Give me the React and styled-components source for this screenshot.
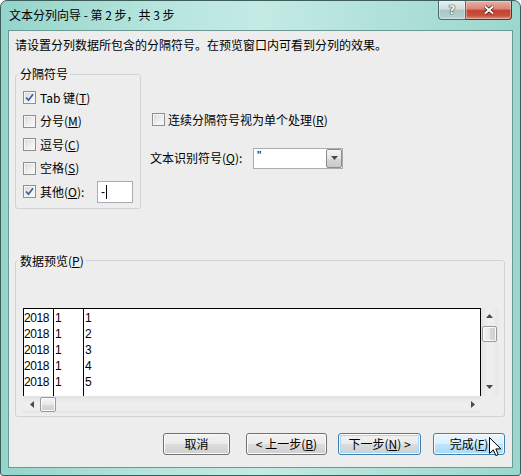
import styled, { createGlobalStyle } from "styled-components";

const GlobalStyle = createGlobalStyle`
  html, body {
    margin: 0;
    padding: 0;
    background: #fff;
  }
  body {
    font-family: "Noto Sans CJK SC", "Noto Sans", sans-serif;
    font-size: 12px;
    color: #000;
  }
  * {
    box-sizing: border-box;
  }
`;

const Window = styled.div`
  width: 521px;
  height: 476px;
  border: 1px solid #3d5e5a;
  border-radius: 7px 7px 3px 3px;
  background: linear-gradient(
    90deg,
    #94d4ca 0%,
    #b6e5de 30%,
    #c4eae4 50%,
    #afe1d9 75%,
    #9bd7cd 100%
  );
  display: flex;
  flex-direction: column;
  overflow: hidden;
`;

const TitleBar = styled.div`
  height: 29px;
  display: flex;
  align-items: flex-start;
  padding: 0 8px;
`;

const Title = styled.div`
  margin-top: 6px;
  line-height: 16px;
`;

const CaptionButtons = styled.div`
  margin-left: auto;
  display: flex;
`;

const CaptionButton = styled.div`
  width: ${(p) => p.$w}px;
  height: 19px;
  display: flex;
  align-items: center;
  justify-content: center;
  border: 1px solid ${(p) => (p.$close ? "#6e2b22" : "#4a6b6a")};
  border-top: none;
  border-left: ${(p) => (p.$close ? "none" : undefined)};
  border-radius: ${(p) => (p.$close ? "0 0 4px 0" : "0 0 0 4px")};
  background: ${(p) =>
    p.$close
      ? "linear-gradient(#eab0a3 0%, #d88474 45%, #c3432f 52%, #c9503b 80%, #e08b7a 100%)"
      : "linear-gradient(#e4efee 0%, #cddfde 45%, #a9c6c5 52%, #b9d4d3 100%)"};
  box-shadow: inset 0 0 0 1px rgba(255, 255, 255, 0.35);
`;

const HelpGlyph = styled.span`
  font-family: "DejaVu Sans", sans-serif;
  font-weight: bold;
  font-size: 12px;
  line-height: 1;
  color: #f4f6f6;
  text-shadow: 0 0 1px #2b3c3c, 0 0 1px #2b3c3c, 0 0 1px #2b3c3c;
`;

const Client = styled.div`
  flex: 1;
  margin: 0 7px 7px;
  border: 1px solid #6a9893;
  background: #ededed;
  padding: 6px 7px 0 6px;
  display: flex;
  flex-direction: column;
`;

const Instruction = styled.div`
  line-height: 16px;
  height: 16px;
`;

const OptionsRow = styled.div`
  display: flex;
  align-items: flex-start;
  margin-top: 13px;
`;

const GroupBox = styled.fieldset`
  margin: 0;
  margin-top: ${(p) => p.$top || 0}px;
  padding: 0;
  min-width: 0;
  width: ${(p) => p.$w}px;
  border: 1px solid #cdd3d7;
  border-radius: 3px;
`;

const Legend = styled.legend`
  padding: 0 2px;
  margin-left: 2px;
  line-height: 16px;
`;

const SeparatorList = styled.div`
  padding: 4px 7px 4px 7px;
  display: flex;
  flex-direction: column;
`;

const OptionRow = styled.div`
  height: 23.5px;
  display: flex;
  align-items: center;
`;

const Box = styled.span`
  width: 13px;
  height: 13px;
  flex-shrink: 0;
  margin-left: ${(p) => p.$indent || 0}px;
  border: 1px solid #8e8f8f;
  background: linear-gradient(135deg, #d3d6da 0%, #f0f0f1 60%, #fbfbfb 100%);
  box-shadow: inset 0 0 0 1px #f6f6f6;
  display: flex;
  align-items: center;
  justify-content: center;
`;

const Label = styled.span`
  margin-left: ${(p) => p.$gap || 4}px;
  line-height: 16px;
  white-space: nowrap;
`;

const Key = styled.span`
  text-decoration: underline;
  text-underline-offset: 1px;
`;

const TextBox = styled.div`
  margin-left: auto;
  width: 36px;
  height: 22px;
  background: #fff;
  border: 1px solid #abadb3;
  display: flex;
  align-items: center;
  padding-left: 3px;
  font-family: "Liberation Sans", Arial, sans-serif;
`;

const Caret = styled.span`
  width: 1px;
  height: 14px;
  background: #000;
  margin-left: 1px;
`;

const SideOptions = styled.div`
  margin-left: 9px;
  padding-top: 42px;
  display: flex;
  flex-direction: column;
`;

const QualifierRow = styled.div`
  margin-top: 16px;
  height: 21px;
  display: flex;
  align-items: center;
`;

const FieldLabel = styled.span`
  width: 103px;
  line-height: 16px;
  white-space: nowrap;
`;

const Select = styled.div`
  width: 90px;
  height: 21px;
  background: #fff;
  border: 1px solid #abadb3;
  display: flex;
  align-items: stretch;
`;

const SelectValue = styled.div`
  flex: 1;
  padding-left: 3px;
  line-height: 14px;
  font-family: "Liberation Sans", Arial, sans-serif;
`;

const SelectButton = styled.div`
  width: 16px;
  margin: 0 0 0 0;
  border: 1px solid #8d8d8d;
  border-radius: 2px;
  background: linear-gradient(#f4f4f4 0%, #e6e6e6 50%, #d6d6d6 51%, #cacaca 100%);
  display: flex;
  align-items: center;
  justify-content: center;
`;

const PreviewBody = styled.div`
  padding: 39px 6px 3px 7px;
`;

const Preview = styled.div`
  display: grid;
  grid-template-columns: 458px 17px;
  grid-template-rows: 88px 17px;
`;

const Sheet = styled.div`
  background: #fff;
  border: 1px solid #000;
  border-bottom: none;
  display: flex;
  overflow: hidden;
`;

const Column = styled.div`
  width: ${(p) => (p.$w ? `${p.$w}px` : "auto")};
  flex: ${(p) => (p.$w ? "none" : 1)};
  border-right: ${(p) => (p.$w ? "1px solid #000" : "none")};
  padding: 1px 0 0 ${(p) => p.$pad || 0}px;
  font-family: "Liberation Sans", Arial, sans-serif;
  font-size: 12px;
  letter-spacing: -0.4px;
  line-height: 16px;
`;

const HScroll = styled.div`
  display: flex;
  background: linear-gradient(#e4e4e4, #eeeeee 40%, #eeeeee 70%, #e6e6e6);
`;

const VScroll = styled.div`
  display: flex;
  flex-direction: column;
  background: linear-gradient(90deg, #e4e4e4, #eeeeee 40%, #eeeeee 70%, #e6e6e6);
`;

const ScrollArrow = styled.div`
  width: 17px;
  height: 17px;
  flex-shrink: 0;
  display: flex;
  align-items: center;
  justify-content: center;
  margin-left: ${(p) => (p.$end && !p.$vertical ? "auto" : 0)};
  margin-top: ${(p) => (p.$end && p.$vertical ? "auto" : 0)};
`;

const Thumb = styled.div`
  width: ${(p) => (p.$vertical ? 15 : 16)}px;
  height: ${(p) => (p.$vertical ? 16 : 15)}px;
  margin: ${(p) => (p.$vertical ? "1px 0 0 1px" : "1px 0 0 0")};
  border: 1px solid #999;
  border-radius: 2px;
  background: ${(p) =>
    p.$vertical
      ? "linear-gradient(90deg, #f4f4f4, #e8e8e8 50%, #d8d8d8 51%, #cfcfcf)"
      : "linear-gradient(#f4f4f4, #e8e8e8 50%, #d8d8d8 51%, #cfcfcf)"};
  box-shadow: inset 0 0 0 1px #fafafa;
`;

const ButtonRow = styled.div`
  display: flex;
  justify-content: flex-end;
  margin-top: 16px;
`;

const Button = styled.button`
  position: relative;
  width: ${(p) => p.$w}px;
  height: 22px;
  margin-left: ${(p) => p.$gap || 0}px;
  padding: 0;
  font: inherit;
  color: #000;
  border: 1px solid ${(p) => (p.$variant ? "#3c7fb1" : "#707070")};
  border-radius: 3px;
  background: ${(p) =>
    p.$variant === "hover"
      ? "linear-gradient(#eaf6fd 0%, #d9f0fc 50%, #bee6fd 51%, #a7d9f5 100%)"
      : "linear-gradient(#f2f2f2 0%, #ebebeb 49%, #dddddd 50%, #cfcfcf 100%)"};
  box-shadow: ${(p) =>
    p.$variant === "focus"
      ? "inset 0 0 0 1px #fff, inset 0 0 0 2px #a8d8f2"
      : "inset 0 0 0 1px #fcfcfc"};
`;

const Pointer = styled.svg`
  position: absolute;
  left: 55px;
  top: 3px;
`;

const Tri = ({ dir }) => {
  const pts = {
    up: "0,4 3.5,0 7,4",
    down: "0,0 7,0 3.5,4",
    left: "4,0 4,7 0,3.5",
    right: "0,0 0,7 4,3.5",
  }[dir];
  const horiz = dir === "left" || dir === "right";
  return (
    <svg width={horiz ? 4 : 7} height={horiz ? 7 : 4}>
      <polygon points={pts} fill="#4a4a4a" />
    </svg>
  );
};

const Check = () => (
  <svg width="11" height="11" viewBox="0 0 11 11">
    <path
      d="M2 5.5 L4.5 8.2 L9 2.2"
      fill="none"
      stroke="#4a5f97"
      strokeWidth="1.8"
    />
  </svg>
);

const Checkbox = ({ checked, indent }) => (
  <Box $indent={indent}>{checked && <Check />}</Box>
);

const rows = [1, 2, 3, 4, 5];

export default function App() {
  return (
    <>
      <GlobalStyle />
      <Window>
        <TitleBar>
          <Title>文本分列向导 - 第 2 步，共 3 步</Title>
          <CaptionButtons>
            <CaptionButton $w={28}>
              <HelpGlyph>?</HelpGlyph>
            </CaptionButton>
            <CaptionButton $w={46} $close>
              <svg width="12" height="10" viewBox="0 0 12 10">
                <path d="M2 1.5 L10 8.5 M10 1.5 L2 8.5" stroke="#4a1a14" strokeWidth="3.6" />
                <path d="M2 1.5 L10 8.5 M10 1.5 L2 8.5" stroke="#fff" strokeWidth="2" />
              </svg>
            </CaptionButton>
          </CaptionButtons>
        </TitleBar>

        <Client>
          <Instruction>
            请设置分列数据所包含的分隔符号。在预览窗口内可看到分列的效果。
          </Instruction>

          <OptionsRow>
            <GroupBox $w={126}>
              <Legend>分隔符号</Legend>
              <SeparatorList>
                <OptionRow>
                  <Checkbox checked />
                  <Label>
                    Tab 键(<Key>T</Key>)
                  </Label>
                </OptionRow>
                <OptionRow>
                  <Checkbox />
                  <Label>
                    分号(<Key>M</Key>)
                  </Label>
                </OptionRow>
                <OptionRow>
                  <Checkbox />
                  <Label>
                    逗号(<Key>C</Key>)
                  </Label>
                </OptionRow>
                <OptionRow>
                  <Checkbox />
                  <Label>
                    空格(<Key>S</Key>)
                  </Label>
                </OptionRow>
                <OptionRow>
                  <Checkbox checked />
                  <Label>
                    其他(<Key>O</Key>):
                  </Label>
                  <TextBox>
                    -<Caret />
                  </TextBox>
                </OptionRow>
              </SeparatorList>
            </GroupBox>

            <SideOptions>
              <OptionRow>
                <Checkbox indent={2} />
                <Label $gap={3}>
                  连续分隔符号视为单个处理(<Key>R</Key>)
                </Label>
              </OptionRow>
              <QualifierRow>
                <FieldLabel>
                  文本识别符号(<Key>Q</Key>):
                </FieldLabel>
                <Select>
                  <SelectValue>"</SelectValue>
                  <SelectButton>
                    <Tri dir="down" />
                  </SelectButton>
                </Select>
              </QualifierRow>
            </SideOptions>
          </OptionsRow>

          <GroupBox $w={490} $top={44}>
            <Legend>
              数据预览(<Key>P</Key>)
            </Legend>
            <PreviewBody>
              <Preview>
                <Sheet>
                  <Column $w={30}>
                    {rows.map((r) => (
                      <div key={r}>2018</div>
                    ))}
                  </Column>
                  <Column $w={30} $pad={1}>
                    {rows.map((r) => (
                      <div key={r}>1</div>
                    ))}
                  </Column>
                  <Column $pad={1}>
                    {rows.map((r) => (
                      <div key={r}>{r}</div>
                    ))}
                  </Column>
                </Sheet>
                <VScroll>
                  <ScrollArrow>
                    <Tri dir="up" />
                  </ScrollArrow>
                  <Thumb $vertical />
                  <ScrollArrow $end $vertical>
                    <Tri dir="down" />
                  </ScrollArrow>
                </VScroll>
                <HScroll>
                  <ScrollArrow>
                    <Tri dir="left" />
                  </ScrollArrow>
                  <Thumb />
                  <ScrollArrow $end>
                    <Tri dir="right" />
                  </ScrollArrow>
                </HScroll>
                <div />
              </Preview>
            </PreviewBody>
          </GroupBox>

          <ButtonRow>
            <Button $w={67}>取消</Button>
            <Button $w={81} $gap={16}>
              &lt; 上一步(<Key>B</Key>)
            </Button>
            <Button $w={83} $gap={11} $variant="focus">
              下一步(<Key>N</Key>) &gt;
            </Button>
            <Button $w={72} $gap={12} $variant="hover">
              完成(<Key>F</Key>)
              <Pointer width="13" height="20" viewBox="0 0 13 20">
                <path
                  d="M0.5 0.5 L0.5 16.5 L4.3 12.8 L6.8 18.6 L9.2 17.6 L6.8 11.9 L11.8 11.9 Z"
                  fill="#fff"
                  stroke="#000"
                  strokeWidth="1"
                  strokeLinejoin="miter"
                />
              </Pointer>
            </Button>
          </ButtonRow>
        </Client>
      </Window>
    </>
  );
}
